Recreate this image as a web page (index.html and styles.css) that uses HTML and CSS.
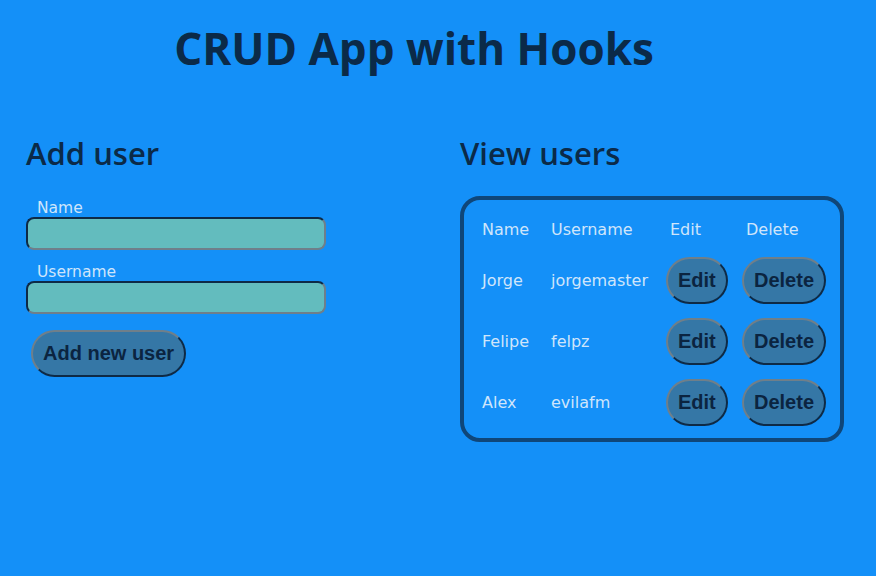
FILE: index.html
```html
<!DOCTYPE html>
<html>
<head>
<meta charset="utf-8">
<link rel="stylesheet" href="styles.css">
</head>
<body>
<div class="app">
  <h1 class="title">CRUD App with Hooks</h1>
  <div class="columns">
    <section class="col">
      <h2 class="heading">Add user</h2>
      <form class="form">
        <label class="label">Name</label>
        <input class="input" type="text">
        <label class="label">Username</label>
        <input class="input" type="text">
        <button class="btn add" type="button">Add new user</button>
      </form>
    </section>
    <section class="col">
      <h2 class="heading">View users</h2>
      <div class="box">
        <table class="table">
          <thead>
            <tr><th class="c-name">Name</th><th class="c-user">Username</th><th class="c-act">Edit</th><th class="c-act">Delete</th></tr>
          </thead>
          <tbody>
            <tr><td>Jorge</td><td>jorgemaster</td><td><button class="btn" type="button">Edit</button></td><td><button class="btn" type="button">Delete</button></td></tr>
            <tr><td>Felipe</td><td>felpz</td><td><button class="btn" type="button">Edit</button></td><td><button class="btn" type="button">Delete</button></td></tr>
            <tr><td>Alex</td><td>evilafm</td><td><button class="btn" type="button">Edit</button></td><td><button class="btn" type="button">Delete</button></td></tr>
          </tbody>
        </table>
      </div>
    </section>
  </div>
</div>
</body>
</html>
```
FILE: styles.css
```css
html, body {
  margin: 0;
  padding: 0;
  background: #1490f8;
  height: 100%;
}
body {
  font-family: "DejaVu Sans", Verdana, sans-serif;
  color: #cfe5fb;
}
.app {
  width: 828px;
}
.title {
  margin: 0;
  padding-top: 20px;
  height: 56px;
  line-height: 56px;
  text-align: center;
  font-family: "Open Sans", "DejaVu Sans", sans-serif;
  font-size: 44px;
  font-weight: 700;
  color: #0b2a48;
}
.columns {
  display: grid;
  grid-template-columns: 434px 384px;
  margin-top: 57px;
  padding-left: 26px;
}
.heading {
  margin: 0;
  height: 40px;
  line-height: 40px;
  font-family: "Open Sans", "DejaVu Sans", sans-serif;
  font-size: 31px;
  font-weight: 600;
  color: #0b2a48;
}
.form {
  display: flex;
  flex-direction: column;
  align-items: flex-start;
  margin-top: 26px;
}
.label {
  font-size: 15.5px;
  line-height: 18px;
  margin-left: 11px;
}
.input {
  width: 300px;
  height: 33px;
  box-sizing: border-box;
  margin: 0 0 13px 0;
  background: #63bcbe;
  border: 2px solid;
  border-color: #0e2a46 #6f7f8a #6f7f8a #0e2a46;
  border-radius: 8px;
  padding: 0 8px;
}
.btn {
  font-family: "Liberation Sans", Arial, sans-serif;
  font-weight: 700;
  font-size: 20px;
  line-height: 23px;
  padding: 10px;
  color: #0b2440;
  background: #3577a6;
  border: 2px solid;
  border-color: #6f7f8a #0e2a46 #0e2a46 #6f7f8a;
  border-radius: 24px;
  cursor: pointer;
}
.add {
  margin: 3px 0 0 5px;
}
.box {
  margin-top: 23px;
  width: 384px;
  height: 246px;
  box-sizing: border-box;
  border: 4px solid #0f4679;
  border-radius: 20px;
  padding: 8px 0 0 18px;
}
.table {
  border-collapse: collapse;
  border-spacing: 0;
}
.table th {
  font-weight: 400;
  text-align: left;
  height: 42px;
  padding: 0;
  font-size: 16px;
}
.table td {
  padding: 7px 0;
  font-size: 16px;
}
.c-name { width: 69px; }
.c-user { width: 115px; }
.table th.c-act { padding-left: 4px; }
.table td:nth-child(3) { width: 76px; }
```
